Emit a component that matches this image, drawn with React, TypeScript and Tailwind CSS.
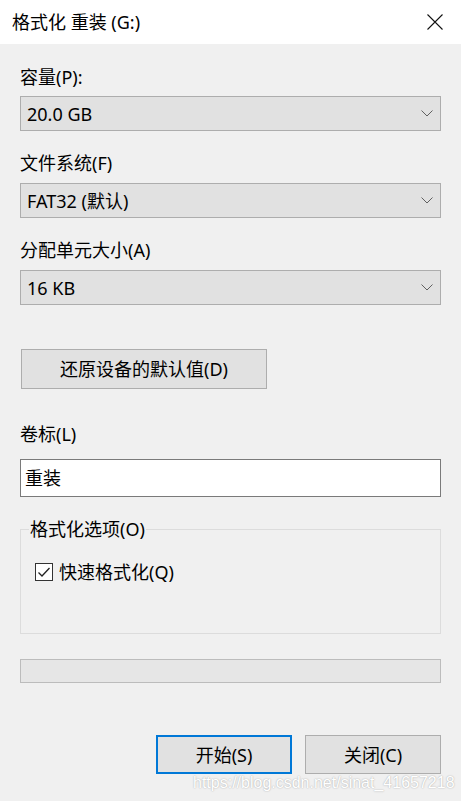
import React from "react";

const FONT = { fontFamily: '"Noto Sans", "Noto Sans CJK SC", sans-serif' };

function Chevron() {
    return (
        <svg width="12" height="7" viewBox="0 0 12 7" className="shrink-0">
            <polyline points="0.5,0.5 6,6 11.5,0.5" fill="none" stroke="#606060" strokeWidth="1" />
        </svg>
    );
}

function Select({ value }: { value: string }) {
    return (
        <div className="h-[35px] w-full bg-[#e1e1e1] border border-[#adadad] flex items-center justify-between pl-[6px] pr-[7px]">
            <span className="text-[18px] leading-[24px] text-black">{value}</span>
            <Chevron />
        </div>
    );
}

function Label({ children, className = "" }: { children: React.ReactNode; className?: string }) {
    return <div className={`text-[18px] leading-[24px] text-black ${className}`}>{children}</div>;
}

export default function App() {
    return (
        <div className="relative w-[461px] h-[801px] bg-[#f0f0f0] overflow-hidden flex flex-col" style={FONT}>
            {/* Title bar */}
            <div className="h-[44px] bg-white flex items-center justify-between pl-[12px] pr-[18px] shrink-0">
                <span className="text-[18px] leading-[24px] text-black">格式化 重装 (G:)</span>
                <svg width="16" height="16" viewBox="0 0 16 16">
                    <path d="M0.5 0.5 L15.5 15.5 M15.5 0.5 L0.5 15.5" stroke="#111" strokeWidth="1.1" />
                </svg>
            </div>

            {/* Body */}
            <div className="flex flex-col px-[20px] pt-[21px]">
                <Label>容量(P):</Label>
                <div className="mt-[7px]">
                    <Select value="20.0 GB" />
                </div>

                <Label className="mt-[20px]">文件系统(F)</Label>
                <div className="mt-[8px]">
                    <Select value="FAT32 (默认)" />
                </div>

                <Label className="mt-[20px]">分配单元大小(A)</Label>
                <div className="mt-[8px]">
                    <Select value="16 KB" />
                </div>

                <button className="mt-[44px] ml-[1px] w-[246px] h-[40px] bg-[#e1e1e1] border border-[#adadad] text-[18px] leading-[24px] text-black">
                    还原设备的默认值(D)
                </button>

                <Label className="mt-[33px]">卷标(L)</Label>
                <div className="mt-[13px] h-[38px] bg-white border border-[#7a7a7a] flex items-center pl-[4px]">
                    <span className="text-[18px] leading-[24px] text-black">重装</span>
                </div>

                {/* Options group */}
                <fieldset className="mt-[20px] border border-[#dcdcdc] pb-[49px]">
                    <legend className="ml-[8px] px-[1px] text-[18px] leading-[24px] text-black">格式化选项(O)</legend>
                    <div className="mt-[19px] pl-[14px] flex items-center gap-[6px]">
                        <div className="w-[18px] h-[18px] border border-[#333] bg-white flex items-center justify-center">
                            <svg width="14" height="14" viewBox="0 0 14 14">
                                <polyline points="1.5,7.5 5,11 12.5,3" fill="none" stroke="#222" strokeWidth="1.3" />
                            </svg>
                        </div>
                        <span className="text-[18px] leading-[24px] text-black">快速格式化(Q)</span>
                    </div>
                </fieldset>

                {/* Progress bar */}
                <div className="mt-[25px] h-[24px] bg-[#e6e6e6] border border-[#bcbcbc]" />

                {/* Actions */}
                <div className="mt-[52px] flex justify-end gap-[13px]">
                    <button className="w-[136px] h-[39px] bg-[#e1e1e1] border-2 border-[#0078d7] text-[18px] leading-[24px] text-black">
                        开始(S)
                    </button>
                    <button className="w-[136px] h-[39px] bg-[#e1e1e1] border border-[#adadad] text-[18px] leading-[24px] text-black">
                        关闭(C)
                    </button>
                </div>
            </div>

            {/* Watermark */}
            <div
                className="absolute left-[193px] top-[773px] text-[16px] leading-[20px] text-white"
                style={{ fontFamily: '"Liberation Sans", Arial, sans-serif', textShadow: "0 0 1.5px #9a9a9a" }}
            >
                https://blog.csdn.net/sinat_41657218
            </div>
        </div>
    );
}
